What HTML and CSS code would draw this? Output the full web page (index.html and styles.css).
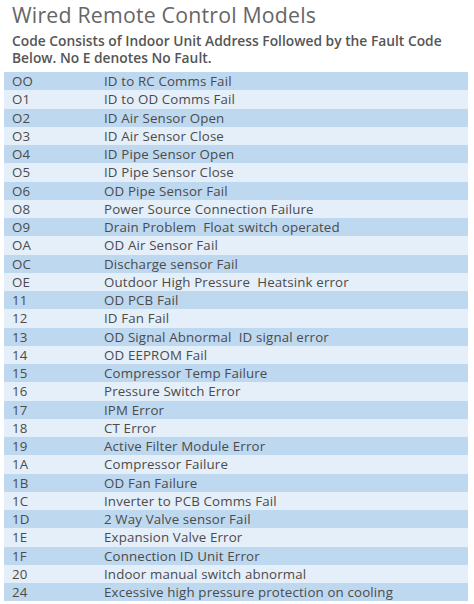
FILE: index.html
```html
<!DOCTYPE html>
<html>
<head>
<meta charset="utf-8">
<link rel="stylesheet" href="styles.css">
</head>
<body>
<div class="page">
  <h1 class="title">Wired Remote Control Models</h1>
  <p class="intro">Code Consists of Indoor Unit Address Followed by the Fault Code Below. No E denotes No Fault.</p>
  <div class="table">
    <div class="row"><span class="code">OO</span><span class="desc">ID to RC Comms Fail</span></div>
    <div class="row"><span class="code">O1</span><span class="desc">ID to OD Comms Fail</span></div>
    <div class="row"><span class="code">O2</span><span class="desc">ID Air Sensor Open</span></div>
    <div class="row"><span class="code">O3</span><span class="desc">ID Air Sensor Close</span></div>
    <div class="row"><span class="code">O4</span><span class="desc">ID Pipe Sensor Open</span></div>
    <div class="row"><span class="code">O5</span><span class="desc">ID Pipe Sensor Close</span></div>
    <div class="row"><span class="code">O6</span><span class="desc">OD Pipe Sensor Fail</span></div>
    <div class="row"><span class="code">O8</span><span class="desc">Power Source Connection Failure</span></div>
    <div class="row"><span class="code">O9</span><span class="desc">Drain Problem&nbsp; Float switch operated</span></div>
    <div class="row"><span class="code">OA</span><span class="desc">OD Air Sensor Fail</span></div>
    <div class="row"><span class="code">OC</span><span class="desc">Discharge sensor Fail</span></div>
    <div class="row"><span class="code">OE</span><span class="desc">Outdoor High Pressure&nbsp; Heatsink error</span></div>
    <div class="row"><span class="code">11</span><span class="desc">OD PCB Fail</span></div>
    <div class="row"><span class="code">12</span><span class="desc">ID Fan Fail</span></div>
    <div class="row"><span class="code">13</span><span class="desc">OD Signal Abnormal&nbsp; ID signal error</span></div>
    <div class="row"><span class="code">14</span><span class="desc">OD EEPROM Fail</span></div>
    <div class="row"><span class="code">15</span><span class="desc">Compressor Temp Failure</span></div>
    <div class="row"><span class="code">16</span><span class="desc">Pressure Switch Error</span></div>
    <div class="row"><span class="code">17</span><span class="desc">IPM Error</span></div>
    <div class="row"><span class="code">18</span><span class="desc">CT Error</span></div>
    <div class="row"><span class="code">19</span><span class="desc">Active Filter Module Error</span></div>
    <div class="row"><span class="code">1A</span><span class="desc">Compressor Failure</span></div>
    <div class="row"><span class="code">1B</span><span class="desc">OD Fan Failure</span></div>
    <div class="row"><span class="code">1C</span><span class="desc">Inverter to PCB Comms Fail</span></div>
    <div class="row"><span class="code">1D</span><span class="desc">2 Way Valve sensor Fail</span></div>
    <div class="row"><span class="code">1E</span><span class="desc">Expansion Valve Error</span></div>
    <div class="row"><span class="code">1F</span><span class="desc">Connection ID Unit Error</span></div>
    <div class="row"><span class="code">20</span><span class="desc">Indoor manual switch abnormal</span></div>
    <div class="row"><span class="code">24</span><span class="desc">Excessive high pressure protection on cooling</span></div>
  </div>
</div>
</body>
</html>
```

FILE: styles.css
```css
html, body {
  margin: 0;
  padding: 0;
  background: #ffffff;
}
body {
  font-family: "Open Sans", "Noto Sans", sans-serif;
  color: #4f4f4f;
}
.page {
  width: 474px;
  height: 604px;
  overflow: hidden;
  padding: 0 6px 0 4px;
  box-sizing: border-box;
}
.title {
  margin: 0;
  padding: 0 0 0 8px;
  font-size: 21.3px;
  font-weight: 400;
  line-height: 30px;
  color: #666666;
  letter-spacing: 0.2px;
}
.intro {
  margin: 3px 0 0 0;
  padding: 0 0 0 8px;
  font-size: 13.8px;
  font-weight: 600;
  line-height: 16.5px;
  color: #555555;
  height: 39px;
}
.table {
  display: flex;
  flex-direction: column;
}
.row {
  display: flex;
  align-items: center;
  height: 18.25px;
  font-size: 13.3px;
  line-height: 18px;
  letter-spacing: 0.15px;
  background: #e5eff9;
  color: #4b4b4b;
}
.row:nth-child(odd) {
  background: #bed8ef;
}
.code {
  box-sizing: border-box;
  width: 100px;
  padding-left: 8px;
  flex-shrink: 0;
}
.desc {
  white-space: nowrap;
}
```
